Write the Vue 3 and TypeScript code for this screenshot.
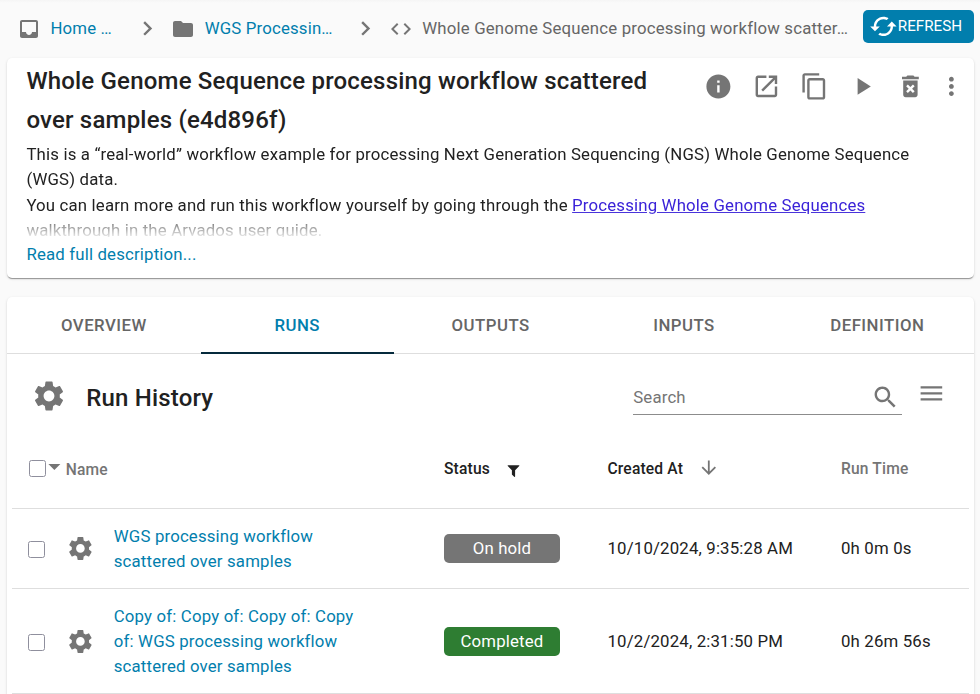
<script setup lang="ts">
interface Run {
  name: string
  status: string
  kind: 'hold' | 'done'
  created: string
  runtime: string
}

const icons = {
  inbox: 'M19 3H4.99c-1.11 0-1.98.89-1.98 2L3 19c0 1.1.88 2 1.99 2H19c1.1 0 2-.9 2-2V5c0-1.11-.9-2-2-2zm0 12h-4c0 1.66-1.35 3-3 3s-3-1.34-3-3H4.99V5H19v10z',
  folder: 'M10 4H4c-1.1 0-1.99.9-1.99 2L2 18c0 1.1.9 2 2 2h16c1.1 0 2-.9 2-2V8c0-1.1-.9-2-2-2h-8l-2-2z',
  code: 'M9.4 16.6L4.8 12l4.6-4.6L8 6l-6 6 6 6 1.4-1.4zm5.2 0l4.6-4.6-4.6-4.6L16 6l6 6-6 6-1.4-1.4z',
  chevron: 'M10 6L8.59 7.41 13.17 12l-4.58 4.59L10 18l6-6z',
  cached: 'M19 8l-4 4h3c0 3.31-2.69 6-6 6-1.01 0-1.97-.25-2.8-.7l-1.46 1.46C8.97 19.54 10.43 20 12 20c4.42 0 8-3.58 8-8h3l-4-4zM6 12c0-3.31 2.69-6 6-6 1.01 0 1.97.25 2.8.7l1.46-1.46C15.03 4.46 13.57 4 12 4c-4.42 0-8 3.58-8 8H1l4 4 4-4H6z',
  more: 'M12 8c1.1 0 2-.9 2-2s-.9-2-2-2-2 .9-2 2 .9 2 2 2zm0 2c-1.1 0-2 .9-2 2s.9 2 2 2 2-.9 2-2-.9-2-2-2zm0 6c-1.1 0-2 .9-2 2s.9 2 2 2 2-.9 2-2-.9-2-2-2z',
  gear: 'M19.14 12.94c.04-.3.06-.61.06-.94 0-.32-.02-.64-.07-.94l2.03-1.58c.18-.14.23-.41.12-.61l-1.92-3.32c-.12-.22-.37-.29-.59-.22l-2.39.96c-.5-.38-1.03-.7-1.62-.94l-.36-2.54c-.04-.24-.24-.41-.48-.41h-3.84c-.24 0-.43.17-.47.41l-.36 2.54c-.59.24-1.13.57-1.62.94l-2.39-.96c-.22-.08-.47 0-.59.22L2.74 8.87c-.12.21-.08.47.12.61l2.03 1.58c-.05.3-.09.63-.09.94s.02.64.07.94l-2.03 1.58c-.18.14-.23.41-.12.61l1.92 3.32c.12.22.37.29.59.22l2.39-.96c.5.38 1.03.7 1.62.94l.36 2.54c.05.24.24.41.48.41h3.84c.24 0 .44-.17.47-.41l.36-2.54c.59-.24 1.13-.56 1.62-.94l2.39.96c.22.08.47 0 .59-.22l1.92-3.32c.12-.22.07-.47-.12-.61l-2.01-1.58zM12 15.6c-1.98 0-3.6-1.62-3.6-3.6s1.62-3.6 3.6-3.6 3.6 1.62 3.6 3.6-1.62 3.6-3.6 3.6z',
  search: 'M15.5 14h-.79l-.28-.27C15.41 12.59 16 11.11 16 9.5 16 5.91 13.09 3 9.5 3S3 5.91 3 9.5 5.91 16 9.5 16c1.61 0 3.09-.59 4.23-1.57l.27.28v.79l5 4.99L20.49 19l-4.99-5zm-6 0C7.01 14 5 11.99 5 9.5S7.01 5 9.5 5 14 7.01 14 9.5 11.99 14 9.5 14z',
  menu: 'M3 18h18v-2H3v2zm0-5h18v-2H3v2zm0-7v2h18V6H3z',
  down: 'M20 12l-1.41-1.41L13 16.17V4h-2v12.17l-5.58-5.59L4 12l8 8 8-8z',
  caret: 'M7 10l5 5 5-5z',
  filter: 'M1595 295q17 41-14 70l-493 493v742q0 42-39 59-13 5-25 5-27 0-45-19l-256-256q-19-19-19-45V858L211 365q-31-29-14-70 17-39 59-39h1280q42 0 59 39z',
}

const actions: string[] = [
  'M12 2C6.48 2 2 6.48 2 12s4.48 10 10 10 10-4.48 10-10S17.52 2 12 2zm1 15h-2v-6h2v6zm0-8h-2V7h2v2z',
  'M19 19H5V5h7V3H5c-1.11 0-2 .9-2 2v14c0 1.1.89 2 2 2h14c1.1 0 2-.9 2-2v-7h-2v7zM14 3v2h3.59l-9.83 9.83 1.41 1.41L19 6.41V10h2V3h-7z',
  'M16 1H4c-1.1 0-2 .9-2 2v14h2V3h12V1zm3 4H8c-1.1 0-2 .9-2 2v14c0 1.1.9 2 2 2h11c1.1 0 2-.9 2-2V7c0-1.1-.9-2-2-2zm0 16H8V7h11v14z',
  'M8 5v14l11-7z',
  'M6 19c0 1.1.9 2 2 2h8c1.1 0 2-.9 2-2V7H6v12zm2.46-7.12l1.41-1.41L12 12.59l2.12-2.12 1.41 1.41L13.41 14l2.12 2.12-1.41 1.41L12 15.41l-2.12 2.12-1.41-1.41L10.59 14l-2.13-2.12zM15.5 4l-1-1h-5l-1 1H5v2h14V4z',
]

const tabs: string[] = ['Overview', 'Runs', 'Outputs', 'Inputs', 'Definition']
const activeTab = 'Runs'

const runs: Run[] = [
  { name: 'WGS processing workflow scattered over samples', status: 'On hold', kind: 'hold', created: '10/10/2024, 9:35:28 AM', runtime: '0h 0m 0s' },
  { name: 'Copy of: Copy of: Copy of: Copy of: WGS processing workflow scattered over samples', status: 'Completed', kind: 'done', created: '10/2/2024, 2:31:50 PM', runtime: '0h 26m 56s' },
]
</script>

<template>
  <div class="page">
    <header class="topbar">
      <nav class="crumbs">
        <svg class="icon small" viewBox="0 0 24 24"><path :d="icons.inbox" /></svg>
        <a class="crumb home">Home …</a>
        <svg class="icon" viewBox="0 0 24 24"><path :d="icons.chevron" /></svg>
        <svg class="icon small folder" viewBox="0 0 24 24"><path :d="icons.folder" /></svg>
        <a class="crumb project">WGS Processin…</a>
        <svg class="icon" viewBox="0 0 24 24"><path :d="icons.chevron" /></svg>
        <svg class="icon small code" viewBox="0 0 24 24"><path :d="icons.code" /></svg>
        <span class="crumb current">Whole Genome Sequence processing workflow scatter…</span>
      </nav>
      <button class="refresh">
        <svg class="icon" viewBox="0 0 24 24"><path :d="icons.cached" /></svg>
        <span>REFRESH</span>
      </button>
    </header>

    <section class="card details">
      <div class="head">
        <h1 class="title">Whole Genome Sequence processing workflow scattered over samples (e4d896f)</h1>
        <div class="actions">
          <span v-for="(d, i) in actions" :key="i" class="action">
            <svg class="icon" viewBox="0 0 24 24"><path :d="d" /></svg>
          </span>
          <svg class="icon more" viewBox="0 0 24 24"><path :d="icons.more" /></svg>
        </div>
      </div>
      <div class="description">
        <p>This is a “real-world” workflow example for processing Next Generation Sequencing (NGS) Whole Genome Sequence (WGS) data.</p>
        <p>You can learn more and run this workflow yourself by going through the <a class="doc">Processing Whole Genome Sequences</a> walkthrough in the Arvados user guide.</p>
      </div>
      <a class="readmore">Read full description...</a>
    </section>

    <section class="card runs">
      <div class="tabs">
        <button v-for="t in tabs" :key="t" class="tab" :class="{ active: t === activeTab }">{{ t }}</button>
      </div>
      <div class="toolbar">
        <svg class="icon large" viewBox="0 0 24 24"><path :d="icons.gear" /></svg>
        <h2 class="subtitle">Run History</h2>
        <div class="search">
          <span>Search</span>
          <svg class="icon" viewBox="0 0 24 24"><path :d="icons.search" /></svg>
        </div>
        <svg class="icon columns" viewBox="0 0 24 24"><path :d="icons.menu" /></svg>
      </div>
      <div class="table">
        <div class="row header">
          <div class="select">
            <span class="box"></span>
            <svg class="icon caret" viewBox="0 0 24 24"><path :d="icons.caret" /></svg>
            <span class="label">Name</span>
          </div>
          <div class="cell strong">Status
            <svg class="filter" viewBox="0 0 1792 1792"><path :d="icons.filter" /></svg>
          </div>
          <div class="cell strong">Created At
            <svg class="icon sort" viewBox="0 0 24 24"><path :d="icons.down" /></svg>
          </div>
          <div class="cell muted">Run Time</div>
        </div>
        <div v-for="r in runs" :key="r.created" class="row">
          <div class="item">
            <span class="box"></span>
            <svg class="icon" viewBox="0 0 24 24"><path :d="icons.gear" /></svg>
            <a class="name">{{ r.name }}</a>
          </div>
          <div class="cell"><span class="chip" :class="r.kind">{{ r.status }}</span></div>
          <div class="cell">{{ r.created }}</div>
          <div class="cell">{{ r.runtime }}</div>
        </div>
      </div>
    </section>
  </div>
</template>

<style>
body {
  background: #fafafa;
}
</style>

<style scoped>
.page {
  box-sizing: border-box;
  height: 694px;
  overflow: hidden;
  padding: 0 6px 0 7.2px;
  background: linear-gradient(#f5f5f5, #fafafa 3px);
  font: 400 16.8px/25.2px Roboto, sans-serif;
  letter-spacing: 0.17px;
  color: #212121;
}
.icon {
  display: block;
  flex: none;
  width: 28.8px;
  height: 28.8px;
  fill: #757575;
}
.icon.small {
  width: 24px;
  height: 24px;
}
.topbar {
  display: flex;
  justify-content: space-between;
  height: 58px;
}
.crumbs {
  display: flex;
  align-items: center;
  height: 57px;
  padding-left: 9.6px;
  white-space: nowrap;
}
.crumb {
  color: #017ead;
}
.home {
  width: 82.6px;
  margin-left: 9.6px;
}
.folder {
  margin-left: 9.3px;
}
.project {
  width: 146px;
  margin-left: 9.6px;
}
.code {
  margin-left: 9.2px;
}
.current {
  margin-left: 9.6px;
  letter-spacing: 0.18px;
  color: #666;
}
.refresh {
  display: flex;
  align-items: center;
  box-sizing: border-box;
  flex: none;
  width: 111px;
  height: 33px;
  margin: 10px 0 0;
  padding: 0 0 0 5.6px;
  border: 0;
  border-radius: 5px;
  background: #017ead;
  color: #fff;
  font: 400 15.2px/28px Roboto, sans-serif;
}
.refresh .icon {
  fill: #fff;
}
.refresh span {
  padding: 0 0 1px 0.4px;
}
.card {
  border-radius: 5px;
  background: #fff;
  box-shadow: 0 2px 1px -1px rgba(0, 0, 0, 0.24), 0 1px 1px 0 rgba(0, 0, 0, 0.15), 0 1px 3px 0 rgba(0, 0, 0, 0.12);
}
.details {
  box-sizing: border-box;
  height: 220px;
  padding: 4px 8px 0 19.2px;
}
.head {
  display: flex;
  justify-content: space-between;
}
.title {
  width: 650px;
  margin: 0;
  font-size: 24px;
  font-weight: 500;
  line-height: 38.7px;
  letter-spacing: 0.195px;
}
.actions {
  display: flex;
  padding-top: 10px;
}
.action {
  width: 48px;
}
.more {
  margin-left: -7px;
}
.description {
  height: 95px;
  margin-top: 2.8px;
  overflow: hidden;
  padding-right: 12px;
  -webkit-mask-image: linear-gradient(#000 68px, transparent 98px);
  mask-image: linear-gradient(#000 68px, transparent 98px);
}
.description p {
  margin: 0;
}
.description p + p {
  padding-top: 0.5px;
}
.doc {
  color: #3a22d8;
  text-decoration: underline;
}
.readmore {
  display: block;
  margin-top: 5px;
  color: #017ead;
}
.runs {
  height: 420px;
  margin-top: 19px;
}
.tabs {
  display: grid;
  grid-template-columns: repeat(5, 1fr);
  box-sizing: border-box;
  height: 57px;
  border-bottom: 1px solid #dedede;
}
.tab {
  height: 57px;
  box-sizing: border-box;
  padding: 2px 0 0;
  border: 0;
  border-bottom: 2px solid transparent;
  background: none;
  color: #666;
  font: 500 16.8px/21px Roboto, sans-serif;
  letter-spacing: 0.48px;
  text-transform: uppercase;
}
.tab.active {
  border-color: #052a3c;
  color: #017ead;
}
.toolbar {
  display: flex;
  height: 75px;
  padding: 0 28px 0 23.6px;
}
.large {
  width: 36px;
  height: 36px;
  margin-top: 24px;
}
.subtitle {
  flex: 1;
  margin: 25px 0 0 19.5px;
  font-size: 24px;
  font-weight: 500;
  line-height: 38.4px;
}
.search {
  display: flex;
  align-items: center;
  justify-content: space-between;
  box-sizing: border-box;
  width: 269px;
  height: 36px;
  margin: 25px 15px 0 0;
  padding: 2px 2px 0 0;
  border-bottom: 1px solid #8c8c8c;
  color: #757575;
}
.columns {
  margin-top: 25px;
}
.table {
  padding: 0 5px 0 4.8px;
}
.row {
  display: grid;
  grid-template-columns: 432px 163.5px 233.5px 1fr;
  align-items: center;
  border-bottom: 1px solid #dedede;
}
.header {
  height: 79px;
  font-size: 15.6px;
  font-weight: 500;
}
.header .cell {
  padding-top: 2px;
}
.select {
  display: flex;
  align-items: center;
  padding-left: 17px;
}
.box {
  flex: none;
  box-sizing: border-box;
  width: 17px;
  height: 17px;
  border: 1px solid #8f8f9d;
  border-radius: 2.5px;
  background: #fff;
}
.caret {
  margin: -4px 0 0 -6px;
}
.label {
  margin-left: -3px;
  padding-top: 4px;
  color: #757575;
}
.strong {
  color: #212121;
}
.muted {
  color: #757575;
}
.cell {
  display: flex;
  align-items: center;
  white-space: nowrap;
}
.filter {
  width: 15px;
  height: 15px;
  margin: 2.4px 0 0 16.4px;
  fill: #212121;
}
.sort {
  width: 21.6px;
  height: 21.6px;
  margin: -3px 0 0 15px;
}
.item {
  display: flex;
  align-items: center;
  padding: 15px 0 14px 16px;
}
.row + .row + .row .cell {
  padding-top: 0.8px;
}
.item .box {
  margin-top: 1px;
}
.item .icon {
  margin: -1px 0 0 20.6px;
}
.name {
  width: 250px;
  margin-left: 19.4px;
  line-height: 25px;
  color: #017ead;
}
.chip {
  width: 116px;
  height: 29px;
  border-radius: 5px;
  line-height: 29px;
  color: #fff;
  text-align: center;
}
.hold {
  background: #757575;
}
.done {
  background: #2e7d32;
}
</style>
